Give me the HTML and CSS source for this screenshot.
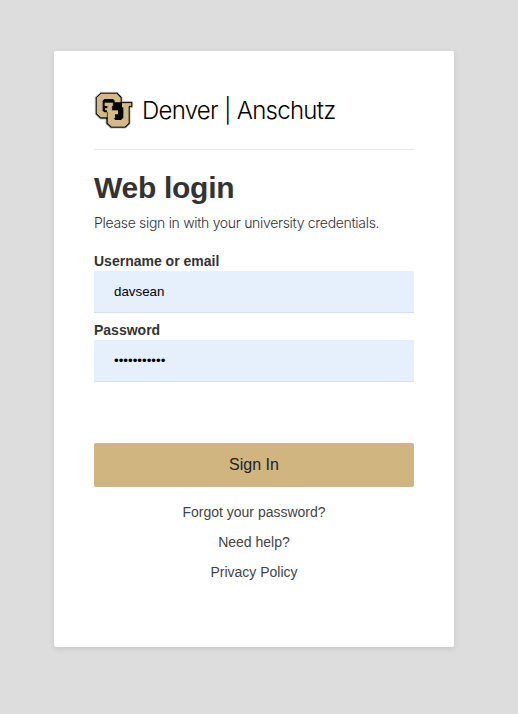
FILE: index.html
```html
<!DOCTYPE html>
<html lang="en">
<head>
<meta charset="utf-8">
<title>Web login</title>
<link rel="stylesheet" href="styles.css">
</head>
<body>
<main class="card">
  <header class="brand">
    <svg class="mark" viewBox="0 0 120 117" aria-hidden="true">
      <path class="edge" d="M20 4H70L84 18V32H116V49H108V98L95 111H50L36 98V84H19L4 69V19Z"/>
      <path class="gold" d="M21 7H68L81 20V35H113V46H105V96L93 108H52L40 96V80H20L7 67V20Z"/>
      <path class="ink" d="M31 24H57L62 29V34H84V49H88V80L81 87H64L58 81V64H31L26 59V29Z"/>
      <path class="gold" d="M32 34H58V46H55V57H72V70H63V82H42V64H39V58H33V52H40V45H32Z"/>
      <path class="line" d="M32 34H58V46H55V57H72M40 64V84"/>
      <path class="line" d="M21 7H68L81 20V35H113V46H105V96L93 108H52L40 96V80H20L7 67V20Z"/>
    </svg>
    <span class="name">Denver | Anschutz</span>
  </header>
  <h1>Web login</h1>
  <p class="intro">Please sign in with your university credentials.</p>
  <form>
    <label for="user">Username or email</label>
    <input id="user" type="text" value="davsean">
    <label for="pass">Password</label>
    <input id="pass" type="password" value="12345678901">
    <button type="button">Sign In</button>
  </form>
  <nav>
    <a>Forgot your password?</a>
    <a>Need help?</a>
    <a>Privacy Policy</a>
  </nav>
</main>
</body>
</html>
```
FILE: styles.css
```css
* { box-sizing: border-box; }
body {
  margin: 0;
  height: 714px;
  padding: 51px 54px;
  background: #ddd;
  color: #333;
  font-family: "Liberation Sans", Arial, sans-serif;
  overflow: hidden;
}
.card {
  width: 400px;
  height: 596px;
  padding: 40px 40px 0;
  background: #fff;
  border-radius: 2px;
  box-shadow: 0 2px 6px rgba(0, 0, 0, .1);
}
.brand {
  display: flex;
  height: 59px;
  border-bottom: 1px solid #e8e8e8;
}
.mark { width: 40px; height: 39px; flex: none; }
.edge { fill: #000; stroke: #b5b7b8; stroke-width: 3; }
.gold { fill: #d2b985; }
.ink { fill: #000; }
.line { fill: none; stroke: #000; stroke-width: 2; }
.name {
  margin-left: 8px;
  font: 300 24px/40px Inter, "Liberation Sans", sans-serif;
  color: #000;
  white-space: nowrap;
  letter-spacing: -.73px;
}
h1 { margin: 20px 0 0; font-size: 30px; line-height: 36px; letter-spacing: -.28px; }
.intro {
  margin: 7px 0 0;
  font: 300 14px/20px Inter, "Liberation Sans", sans-serif;
  white-space: nowrap;
  letter-spacing: -.31px;
}
form { margin-top: 18px; }
label { display: block; height: 20px; font-size: 14px; font-weight: 700; line-height: 20px; }
input {
  display: block;
  width: 100%;
  height: 42px;
  margin: 0 0 7px;
  padding: 0 20px;
  border: 0;
  border-bottom: 1px solid #d7e0ec;
  background: #e6f0fd;
  color: #000;
  font: 13.333px "Liberation Sans", Arial, sans-serif;
}
button {
  display: block;
  width: 100%;
  height: 44px;
  margin-top: 61px;
  border: 0;
  border-radius: 2px;
  background: #d0b580;
  color: #222;
  font: 16px "Liberation Sans", Arial, sans-serif;
}
nav { display: flex; flex-direction: column; align-items: center; margin-top: 10px; }
nav a { font-size: 14px; line-height: 30px; color: #444; }
```
